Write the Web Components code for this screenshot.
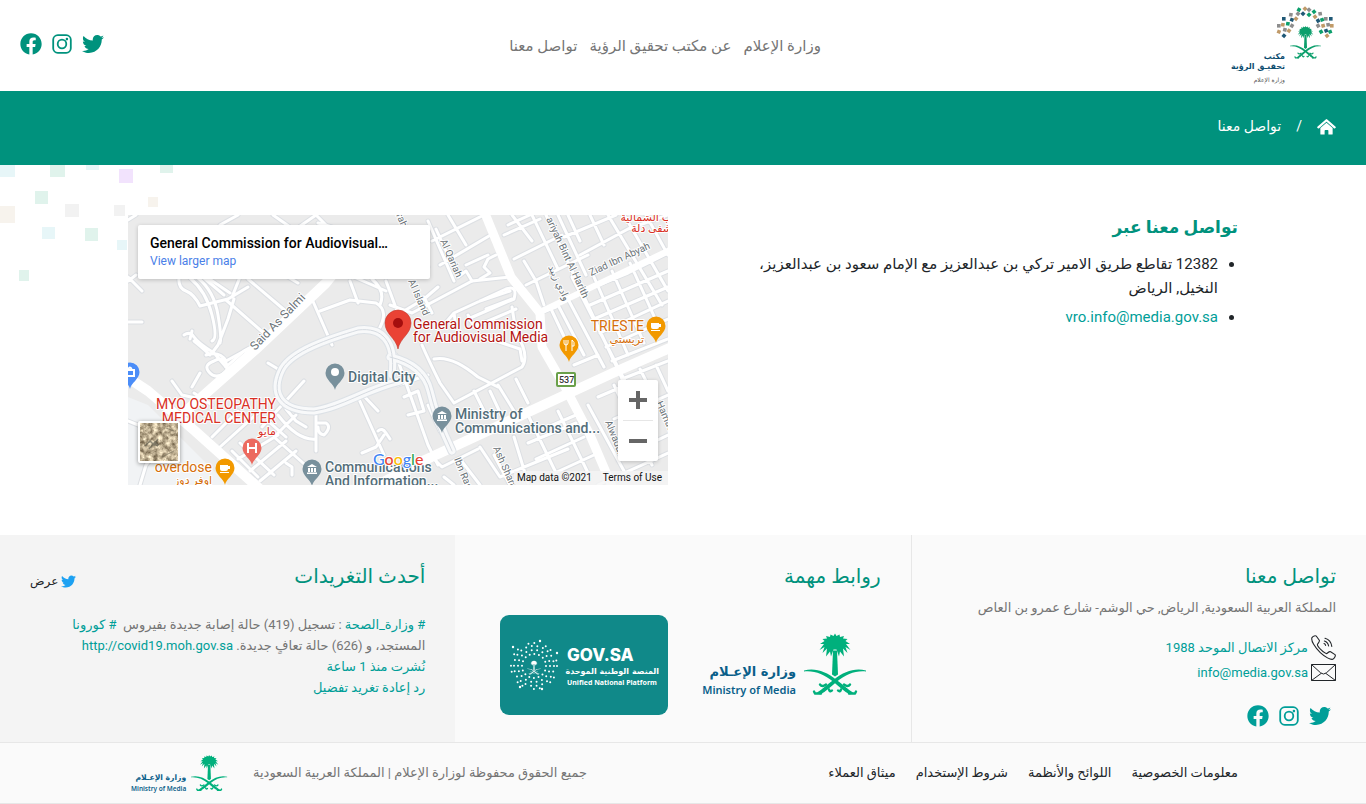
<!DOCTYPE html>
<html lang="ar" dir="rtl">
<head>
<meta charset="utf-8">
<meta name="viewport" content="width=device-width, initial-scale=1">
<title>تواصل معنا</title>
<style>
  :root {
    --brand: #00927d;
    --link: #009e98;
    --ink: #212529;
    --muted: #757575;
    --rule: #e7e7e7;
  }
  body {
    margin: 0;
    background: #fff;
    color: var(--ink);
    font-family: Roboto, "DejaVu Sans", sans-serif;
    font-size: 14px;
    line-height: 24px;
  }
</style>
</head>
<body>
<site-header></site-header>
<page-banner>تواصل معنا</page-banner>
<contact-section></contact-section>
<site-footer></site-footer>
<legal-bar></legal-bar>

<script>
const define = (name, html) => {
  const template = document.createElement('template');
  template.innerHTML = html;
  customElements.define(name, class extends HTMLElement {
    constructor() {
      super();
      this.attachShadow({ mode: 'open' }).append(template.content.cloneNode(true));
    }
  });
};

/* Palm and crossed swords, on a 62 x 62 grid */
const EMBLEM = `
  <g fill="currentColor">
    <path d="M29 17h4l1 24-3 2-3-2z"/>
    <path d="M31 0l1.500 2.500 3-1.500 .5 2.500 4-1-1 2.500 4.500 .5-2 2 4.500 3-4 0 4.500 6-5-3 2 6-4.500-4.500 1 8-4-5-1 5-2.500-7h-3l-2.500 7-1-5-4 5 1-8-4.500 4.500 2-6-5 3 4.500-6-4 0 4.500-3-2-2 4.500-.5-1-2.500 4 1 .5-2.500 3 1.500z"/>
    <path d="M0 37C11 34 22 38 32 46C39 51 44 56 49 59L46 61C40 58 35 53 29 48C20 41 11 37 0 38z"/>
    <path d="M62 37C51 34 40 38 30 46C23 51 18 56 13 59L16 61C22 58 27 53 33 48C42 41 51 37 62 38z"/>
  </g>
  <g fill="none" stroke="currentColor" stroke-width="2.4" stroke-linecap="round">
    <path d="M11 60h6M51 60h-6M16 51q2 3 6 0M46 51q-2 3-6 0M25 56q1 3 3 1M37 56q-1 3-3 1M10 58l1 2M52 58l-1 2"/>
  </g>`;

define('ui-icon', `
  <style>
    :host { display: inline-flex; flex: none; }
    svg { display: none; fill: currentColor; }
    :host([name=facebook]) .facebook, :host([name=instagram]) .instagram,
    :host([name=twitter]) .twitter, :host([name=home]) .home,
    :host([name=phone]) .phone, :host([name=mail]) .mail { display: block; }
    .social { width: 22px; height: 22px; }
    :host([small]) .social { width: 15px; height: 15px; }
    .home { width: 19px; height: 17px; }
    .phone, .mail { width: 25px; height: 25px; }
  </style>
  <svg class="social facebook" viewBox="0 0 512 512"><path d="M504 256C504 119 393 8 256 8S8 119 8 256c0 123.78 90.69 226.38 209.25 245V327.69h-63V256h63v-54.64c0-62.15 37-96.48 93.67-96.48 27.14 0 55.52 4.84 55.52 4.84v61h-31.28c-30.8 0-40.41 19.12-40.41 38.73V256h68.78l-11 71.69h-57.78V501C413.31 482.38 504 379.78 504 256z"/></svg>
  <svg class="social instagram" viewBox="0 0 22 22"><g fill="none" stroke="currentColor" stroke-width="1.8"><rect x="2.2" y="2.2" width="17.6" height="17.6" rx="4.6"/><circle cx="11" cy="11" r="4.3"/></g><circle cx="15.9" cy="6.1" r="1.3"/></svg>
  <svg class="social twitter" viewBox="0 0 512 512"><path d="M459.37 151.716c.325 4.548.325 9.097.325 13.645 0 138.72-105.583 298.558-298.558 298.558-59.452 0-114.68-17.219-161.137-47.106 8.447.974 16.568 1.299 25.34 1.299 49.055 0 94.213-16.568 130.274-44.832-46.132-.975-84.792-31.188-98.112-72.772 6.498.974 12.995 1.624 19.818 1.624 9.421 0 18.843-1.3 27.614-3.573-48.081-9.747-84.143-51.98-84.143-102.985v-1.299c13.969 7.797 30.214 12.67 47.431 13.319-28.264-18.843-46.781-51.005-46.781-87.391 0-19.492 5.197-37.36 14.294-52.954 51.655 63.675 129.3 105.258 216.365 109.807-1.624-7.797-2.599-15.918-2.599-24.04 0-57.828 46.782-104.934 104.934-104.934 30.213 0 57.502 12.67 76.67 33.137 23.715-4.548 46.456-13.32 66.599-25.34-7.798 24.366-24.366 44.833-46.132 57.827 21.117-2.273 41.584-8.122 60.426-16.243-14.292 20.791-32.161 39.308-52.628 54.253z"/></svg>
  <svg class="home" viewBox="0 0 20 18"><path d="M10 5l6.5 5.6V17q0 .6-.6.6H12V13.4q0-.8-.8-.8H8.8q-.8 0-.8.8v4.2H4.1q-.6 0-.6-.6v-6.4z"/><path d="M1.4 9.9L10 2.4l8.6 7.5" fill="none" stroke="currentColor" stroke-width="2.4" stroke-linecap="round" stroke-linejoin="round"/></svg>
  <svg class="phone" viewBox="0 0 25 25"><g fill="none" stroke="#212529" stroke-width="1.1" stroke-linecap="round" stroke-linejoin="round"><path d="M1 2.6C2 1 4.4.3 5.4 1.2L8.3 5.3C9 6.6 7 8.3 6.4 9.4C6.4 11.8 13.4 18.8 15.8 18.6C16.9 18 18 16 19.6 16.7L24 19.6C25 20.7 23.4 23.6 21.8 24.3C19.6 25 14 22 9.3 17.6C4 12.6-.4 5.6 1 2.6z"/><path d="M14.6 10.4q-.3-1.3-1.6-1.8M17.6 11q-.6-3.8-4.2-5M20.8 11.4Q20 5 14 3.2"/></g></svg>
  <svg class="mail" viewBox="0 0 25 25"><path d="M.5 4.5h24v16H.5zM.5 4.5L9.8 13q2.7 2 5.4 0l9.3-8.5M.5 20.5l9.8-7.2M24.5 20.5l-9.8-7.2" fill="none" stroke="#212529"/></svg>
`);

define('social-links', `
  <style>
    :host { display: flex; gap: 9px; color: var(--social, var(--brand)); }
    a { color: inherit; display: flex; }
  </style>
  <a href="#twitter" aria-label="Twitter"><ui-icon name="twitter"></ui-icon></a>
  <a href="#instagram" aria-label="Instagram"><ui-icon name="instagram"></ui-icon></a>
  <a href="#facebook" aria-label="Facebook"><ui-icon name="facebook"></ui-icon></a>
`);

/* Fan of small tiles over the palm: x, y, colour, rotation */
const TILE_COLOURS = { g: '#0c9f6c', n: '#1f5876', s: '#8d8d8d', b: '#c09a68' };
const vroTiles = [
  [53, 20, 's', 0], [53, 26, 'b', 20], [58, 13, 'n', 0], [57, 19, 'b', 10], [59, 24, 's', 15], [58, 30, 'n', 40],
  [65, 9, 's', 10], [62, 18, 'g', 10], [66, 14, 'n', 20], [63, 25, 'b', 35], [70, 13, 'b', 40], [66, 20, 's', 30],
  [73, 4, 'g', 30], [72, 8, 's', 40], [77, 8, 'n', 45], [79, 3, 'b', 45], [83, 4, 's', 45], [83, 9, 'g', 45],
  [88, 6, 'g', 50], [89, 11, 'b', 50], [94, 8, 's', 80], [92, 15, 'n', 60], [96, 14, 'g', 70], [92, 20, 's', 60],
  [100, 13, 's', 0], [97, 20, 'b', 75], [105, 13, 'n', 0], [102, 19, 's', 80], [106, 20, 'b', 0], [100, 25, 'n', 70],
  [104, 26, 'g', 70], [101, 30, 'b', 50], [95, 26, 'g', 60]
].map(([x, y, c, r]) => `<rect x="${x - 2}" y="${y - 2}" width="3.6" height="3.6" fill="${TILE_COLOURS[c]}" transform="rotate(${r} ${x} ${y})"/>`).join('');

define('vision-logo', `
  <style>
    :host { display: block; width: 110px; height: 80px; }
    .root { display: block; width: 100%; height: 100%; direction: ltr; overflow: visible; }
    text { font-family: "DejaVu Sans", sans-serif; text-anchor: end; fill: #0d4d70; font-weight: bold; }
    .sub { font-weight: normal; fill: #555; }
  </style>
  <svg class="root" viewBox="0 0 110 80" role="img" aria-label="مكتب تحقيق الرؤية">
    ${vroTiles}
    <svg x="64" y="20" width="31" height="33" viewBox="0 0 62 62" preserveAspectRatio="none" color="#0c9f6c">${EMBLEM}</svg>
    <text x="59" y="53" font-size="8">مكتب</text>
    <text x="59" y="63" font-size="8">تحقيـق الرؤية</text>
    <text x="59" y="76" font-size="6" class="sub">وزارة الإعلام</text>
  </svg>
`);

define('ministry-logo', `
  <style>
    :host { display: block; width: 170px; height: 66px; }
    :host([small]) { width: 100px; height: 39px; }
    .root { display: block; width: 100%; height: 100%; direction: ltr; }
    text { text-anchor: end; fill: #0a5f8a; }
    .ar { font: bold 13px "DejaVu Sans", sans-serif; }
    .en { font: 600 11px "Noto Sans", "Open Sans", sans-serif; }
  </style>
  <svg class="root" viewBox="0 0 170 66" role="img" aria-label="Ministry of Media">
    <svg x="107" y="1" width="62" height="63" viewBox="0 0 62 62" color="#00b07c">${EMBLEM}</svg>
    <text class="ar" x="99" y="44">وزارة الإعـلام</text>
    <text class="en" x="99" y="62">Ministry of Media</text>
  </svg>
`);

define('gov-logo', `
  <style>
    :host { display: block; width: 168px; height: 100px; border-radius: 9px; background: #108989; }
    .root { display: block; width: 100%; height: 100%; direction: ltr; }
    text { fill: #fff; font-family: "Noto Sans", sans-serif; font-weight: bold; }
    .name { font: 800 17px Inter, sans-serif; }
    .ar { font: bold 8px "DejaVu Sans", sans-serif; text-anchor: end; }
    .dots circle { fill: none; stroke: #fff; stroke-linecap: round; stroke-width: 2; }
  </style>
  <svg class="root" viewBox="0 0 168 100" role="img" aria-label="GOV.SA">
    <g class="dots">
      <circle cx="34" cy="51" r="12" stroke-dasharray="0 4.71"/>
      <circle cx="34" cy="51" r="16" stroke-dasharray="0 5.58"/>
      <circle cx="34" cy="51" r="20" stroke-dasharray="0 5.71"/>
      <circle cx="34" cy="51" r="23" stroke-dasharray="0 12 0 6"/>
    </g>
    <g fill="#fff"><circle cx="40" cy="26" r="1.2"/><circle cx="13" cy="32" r="1.2"/><circle cx="57" cy="38" r="1.2"/><circle cx="42" cy="74" r="1.2"/><circle cx="20" cy="72" r="1.2"/></g>
    <svg x="27" y="45" width="14" height="15" viewBox="0 0 62 62" color="#fff">${EMBLEM}</svg>
    <text class="name" x="67" y="46">GOV.SA</text>
    <text class="ar" x="159" y="59">المنصة الوطنية الموحدة</text>
    <text x="67" y="70" font-size="7">Unified National Platform</text>
  </svg>
`);

define('site-header', `
  <style>
    :host { display: block; }
    header { display: flex; justify-content: space-between; align-items: center; min-height: 91px; padding: 0 30px 0 20px; box-sizing: border-box; }
    nav { display: flex; gap: 12px; }
    a { color: var(--muted); text-decoration: none; font-size: 15px; }
    social-links { padding-bottom: 4px; }
  </style>
  <header>
    <vision-logo></vision-logo>
    <nav aria-label="القائمة الرئيسية">
      <a href="#ministry">وزارة الإعلام</a>
      <a href="#about">عن مكتب تحقيق الرؤية</a>
      <a href="#contact">تواصل معنا</a>
    </nav>
    <social-links></social-links>
  </header>
`);

define('page-banner', `
  <style>
    :host { display: flex; align-items: center; gap: 15px; min-height: 74px; padding: 0 30px 4px; box-sizing: border-box; background: var(--brand); color: #fff; font-size: 14px; }
    a { color: inherit; display: flex; }
  </style>
  <a href="#home" aria-label="الرئيسية"><ui-icon name="home"></ui-icon></a>
  <span>/</span>
  <span><slot></slot></span>
`);

define('map-embed', `
  <style>
    :host { display: block; position: relative; direction: ltr; height: 270px; overflow: hidden; background: #ebebeb; }
    .canvas { display: block; width: 100%; height: 100%; font-family: Roboto, "DejaVu Sans", sans-serif; }
    .case { stroke: #dcdfe3; stroke-width: 5; }
    .minor { stroke: #fff; stroke-width: 3; }
    .avenue path { stroke: #fff; stroke-width: 10; }
    .avenue .mid { stroke-width: 9; }
    .avenue .narrow { stroke-width: 6; }
    .loop { stroke: #dce1e6; stroke-width: 9; }
    .loop-mid { stroke: #f8f9fa; stroke-width: 7; }
    .loop-line { stroke: #d5dae0; stroke-width: 1; }
    .street text, .place text { paint-order: stroke; stroke: #fff; stroke-width: 2px; stroke-linejoin: round; }
    .street text { fill: #6b7378; font-size: 10px; }
    .street .wide { font-size: 12px; }
    .place text { font-size: 14px; }
    .place .ar { font-size: 11px; }
    .place .brand { font: 500 16px Lato, sans-serif; }
    .end { text-anchor: end; }
    .card { position: absolute; top: 10px; left: 10px; width: 292px; box-sizing: border-box; padding: 9px 12px; background: #fff; border-radius: 2px; box-shadow: 0 1px 4px rgba(0,0,0,.2); line-height: 18px; }
    .card b { display: block; color: #000; font-size: 14px; font-weight: 500; }
    .card a { display: block; color: #4a80e8; font-size: 12px; text-decoration: none; }
    .zoom { position: absolute; right: 10px; top: 165px; width: 40px; background: #fff; border-radius: 2px; box-shadow: 0 1px 4px rgba(0,0,0,.2); }
    .zoom button { display: flex; align-items: center; justify-content: center; width: 40px; height: 40px; padding: 0; border: 0; background: none; }
    .zoom hr { margin: 0 5px; border: 0; height: 1px; background: #e6e6e6; }
    .layer { position: absolute; left: 10px; top: 206px; width: 42px; height: 42px; padding: 0; border: 2px solid #fff; border-radius: 2px; box-shadow: 0 1px 4px rgba(0,0,0,.4); overflow: hidden; }
    .layer svg { display: block; }
    .terms { position: absolute; right: 0; bottom: 0; display: flex; gap: 11px; padding: 0 6px 0 3px; background: rgba(245,245,245,.8); color: #111; font: 10px/14px Roboto, sans-serif; }
    .terms a { color: inherit; text-decoration: none; }
  </style>
  <svg class="canvas" viewBox="0 0 540 270" preserveAspectRatio="xMidYMid slice" role="img" aria-label="General Commission for Audiovisual Media">
    <defs>
      <path id="pin" d="M0 17C-1 11-9.5 7-9.5 0A9.5 9.5 0 1 1 9.5 0C9.5 7 1 11 0 17z"/>
      <path id="bank" d="M-5-2L0-5 5-2zM-4-1h2v4h-2zM-1-1h2v4h-2zM2-1h2v4H2zM-5 3.500h10v1.500H-5z" fill="#fff"/>
      <path id="cup" d="M-5-3h8v4q0 2-2 2h-4q-2 0-2-2zM3-2h2v3H3M-5 4h9v1h-9z" fill="#fff"/>
      <g id="roads">
        <path d="M0 5L8 0M0 62L14 76M0 66L8 60M92 10L110 0M145 0L162 12M188 0L200 12M190 8L204 12M168 14L188 0"/>
        <path d="M51 63Q50 73 58 76T72 91L100 84L120 72M62 63Q78 76 84 100T84 126M70 63Q86 76 90 100T92 128M76 63L96 80M80 63L102 78M106 84L100 104 90 130 84 138M104 82L112 62M98 85L138 120M120 64L160 98M160 62L170 68M0 107L14 107"/>
        <path d="M56 120Q62 116 66 122T86 138L98 152M62 124L64 116M66 126Q76 134 82 140M78 140Q92 136 98 146L120 134"/>
        <path d="M86 146q8-5 12 2t-3 11q-8 5-14-2t5-11M98 152L116 136 134 126"/>
        <path d="M184 84L204 130M192 96L222 85 248 88Q262 96 250 116M222 66L230 88M244 64Q258 76 252 90M226 62L258 76M150 158Q146 166 150 174M140 148L150 154M44 166L54 180 72 184M72 158L64 172M66 178L84 190"/>
        <path d="M158 194L168 206 178 212M168 200L146 222 184 256M134 212L176 166M140 206L158 222 M92 232L132 196M84 222L110 196M150 200Q170 226 188 224M188 198V236M190 208h8q6 4-2 12-6-1-6-8M230 182L256 240M233 178L250 196M250 216q4-4 8 2t4 6M256 220l-8 12-14 6M110 244L150 220M122 256L158 226M132 266L168 236M104 236L130 262M112 228L146 260M0 206L30 218M12 270L18 250 30 236M158 248l6 4v8"/>
        <path d="M262 90L284 98 344 66M258 66L272 104M296 82L304 98M276 96L296 84 310 72M272 0L300 52M300 6L326 66M304 26L356 0M312 50L366 18M318 36L308 14M320 0L338 30M338 50L360 40M330 62l8-6 6 10M352 64l10-6-6-6 4-8 8-4"/>
        <path d="M314 112L326 98 378 74Q390 70 386 84L340 104M326 98L328 112M340 100L346 112 388 94M340 104L352 112M352 86L382 76M358 94L384 84M344 66L382 62M404 26L384 0M376 20L412 4M386 44L434 20M398 70L460 40M396 46L408 66 416 90"/>
        <path d="M404 0L430 54M430 0L458 60M380 10L402 0M412 98L428 92 M418 0L498 172M444 62L500 172M436 22L488 0M452 40L500 14 540 0M456 76L500 58 540 38M440 0L452 26M462 0L476 30M480 0L534 90M496 0L540 76M518 0L540 40M462 90L540 56M466 104L540 72M472 118L540 86M478 132L540 104M484 146L540 124M466 62L500 140M484 56L516 128M502 48L530 110M424 96L440 130M430 90L456 140M440 84L476 152M446 150L470 140"/>
        <path d="M294 130Q300 144 312 168L326 188M306 144Q324 140 350 162L370 172M326 188L394 152Q402 140 388 118L384 92M350 120L392 134 394 146M362 176L376 206M370 170L386 196M388 164L400 188M346 176L358 200M300 190L312 216 324 232M268 140L300 230 310 250M276 182L290 176 296 196 280 200M270 170L300 160"/>
        <path d="M302 240L314 252 350 234M316 262L326 270M332 244L352 270M352 232L372 262 440 234M386 222L400 268M400 200L430 262M420 212L448 200M430 196L462 262M400 228L448 208M408 244L456 222M418 262L466 240M366 240L382 270M470 182L498 170M460 190L496 256M486 170L524 250M500 190L520 180M494 164L540 146M512 154L540 210M486 204L540 180M498 240L540 220M470 270L540 238M528 150L540 176"/>
      </g>
    </defs>
    <path d="M0 182L20 190 100 270H0z" fill="#f1f3f5"/>
    <g fill="none" stroke-linejoin="round" stroke-linecap="round">
      <use class="case" href="#roads"/>
      <g class="avenue">
        <path d="M225 34L198 68 127 135 58 196"/>
        <path d="M-4 160L20 176 67 216 134 276"/>
        <path class="mid" d="M356 -4L383 62 412 98 414 132 437 172 462 220 486 276"/>
        <path d="M250 270L297 245 353 219 437 180 487 157 544 132"/>
        <path class="narrow" d="M410 98L460 74 544 34"/>
      </g>
      <use class="minor" href="#roads"/>
      <path class="loop" d="M264 160C268 126 254 112 230 115C200 124 164 136 154 154C142 178 152 196 186 196C214 192 238 174 272 166M262 142Q296 150 302 176T324 236"/>
      <path class="loop-mid" d="M264 160C268 126 254 112 230 115C200 124 164 136 154 154C142 178 152 196 186 196C214 192 238 174 272 166M262 142Q296 150 302 176T324 236"/>
      <path class="loop-line" d="M264 160C268 126 254 112 230 115C200 124 164 136 154 154C142 178 152 196 186 196C214 192 238 174 272 166M262 142Q296 150 302 176T324 236"/>
    </g>
    <g class="street">
      <text class="wide" transform="translate(127 136) rotate(-46)">Said As Salmi</text>
      <text transform="translate(312 26) rotate(66)">Al Qariah</text>
      <text transform="translate(280 66) rotate(66)">Al Island</text>
      <text transform="translate(418 4) rotate(65)">ariyah Bint Al Harith</text>
      <text transform="translate(463 61) rotate(-25)">Ziad Ibn Abyah</text>
      <text transform="translate(420 52) rotate(65)">وادي زبيد</text>
      <text transform="translate(326 244) rotate(68)">Ibn Rashid</text>
      <text transform="translate(365 233) rotate(66)">Ash Sharafiyah</text>
      <text transform="translate(477 207) rotate(68)">Alwadan</text>
      <text transform="translate(528 188) rotate(66)">Hamad Ibn</text>
      <text transform="translate(268 0) rotate(66)">rah</text>
    </g>
    <use href="#pin" x="207" y="158" fill="#78909c"/><circle cx="207" cy="157" r="4" fill="#fff"/>
    <use href="#pin" x="314" y="201" fill="#78909c"/><use href="#bank" x="314" y="201"/>
    <use href="#pin" x="184" y="254" fill="#78909c"/><use href="#bank" x="184" y="254"/>
    <use href="#pin" x="97" y="253" fill="#f29900"/><use href="#cup" x="97" y="253"/>
    <use href="#pin" x="528" y="111" fill="#f29900"/><use href="#cup" x="528" y="111"/>
    <use href="#pin" x="441" y="130" fill="#f29900"/>
    <path d="M436 125v3q0 2 2 2v6M438 125v5M440 125v3q0 2-2 2M444 136v-11q3 2 2 6h-2" fill="none" stroke="#fff"/>
    <use href="#pin" x="124" y="233" fill="#ec6a5f"/><path d="M120 228v10M128 228v10M120 233h8" stroke="#fff" stroke-width="2"/>
    <use href="#pin" x="2" y="157" fill="#4b8df8"/><path d="M-3 155h9v6h-9zM0 155q2-5 4 0" fill="none" stroke="#fff" stroke-width="2"/>
    <path d="M270 134C268 123 257 119 257 108A13 13 0 0 1 283 108C283 119 272 123 270 134z" fill="#ea4335" stroke="#c5372c" stroke-width=".6"/>
    <circle cx="270" cy="108" r="5" fill="#a50e0e"/>
    <rect x="429" y="158" width="18" height="13" rx="1" fill="#fff" stroke="#6aa04a" stroke-width="2"/>
    <text x="431" y="168" font-size="9" font-weight="500" fill="#333">537</text>
    <g class="place">
      <g fill="#b31412"><text x="285" y="114">General Commission</text><text x="285" y="127">for Audiovisual Media</text></g>
      <g fill="#546e7a" font-weight="500"><text x="220" y="167">Digital City</text><text x="327" y="204">Ministry of</text><text x="327" y="218">Communications and...</text><text x="197" y="257">Communications</text><text x="197" y="271">And Information...</text></g>
      <g fill="#d93025" class="end"><text x="148" y="194">MYO OSTEOPATHY</text><text x="148" y="208">MEDICAL CENTER</text><text class="ar" x="148" y="220">مايو</text><text class="ar" x="544" y="6">ب الشمالية</text><text class="ar" x="544" y="17">شفى دلة</text></g>
      <g fill="#d56e0c" class="end"><text x="84" y="257">overdose</text><text class="ar" x="84" y="269">اوفر دوز</text><text x="516" y="116">TRIESTE</text><text class="ar" x="516" y="128">تريستي</text></g>
      <text class="brand" x="245" y="250"><tspan fill="#4285f4">G</tspan><tspan fill="#ea4335">o</tspan><tspan fill="#fbbc05">o</tspan><tspan fill="#4285f4">g</tspan><tspan fill="#34a853">l</tspan><tspan fill="#ea4335">e</tspan></text>
    </g>
  </svg>
  <div class="card"><b>General Commission for Audiovisual…</b><a href="#map">View larger map</a></div>
  <button class="layer" type="button" aria-label="Satellite">
    <svg width="38" height="38" viewBox="0 0 38 38">
      <filter id="ground" color-interpolation-filters="sRGB"><feTurbulence type="fractalNoise" baseFrequency=".22" numOctaves="4" seed="4"/><feColorMatrix values=".9 0 0 0 .3  .9 0 0 0 .24  .85 0 0 0 .15  0 0 0 0 1"/></filter>
      <rect width="38" height="38" filter="url(#ground)"/>
      <path d="M5 23L10 18l4 4 4-6M9 26l6-7 4 3M12 20l6 3" fill="none" stroke="#4b4b40" stroke-width="1.500" opacity=".6"/>
      <path d="M22 34l12-6M26 5l8 3" fill="none" stroke="#6d6652" opacity=".6"/>
    </svg>
  </button>
  <div class="zoom">
    <button type="button" aria-label="Zoom in"><svg width="18" height="18"><path d="M9 0v18M0 9h18" stroke="#666" stroke-width="4"/></svg></button>
    <hr>
    <button type="button" aria-label="Zoom out"><svg width="18" height="18"><path d="M0 9h18" stroke="#666" stroke-width="4"/></svg></button>
  </div>
  <div class="terms"><span>Map data ©2021</span><a href="#terms">Terms of Use</a></div>
`);

define('contact-section', `
  <style>
    :host { display: block; position: relative; }
    .tiles { position: absolute; top: 0; left: 0; }
    .inner { position: relative; display: grid; grid-template-columns: 1fr 1fr; gap: 30px; max-width: 1110px; margin: 0 auto; padding: 50px 15px; }
    h2 { margin: 0 0 13px; color: var(--brand); font-size: 17px; line-height: 24px; }
    ul { margin: 0; padding: 0 20px 0 0; font-size: 15px; }
    li { margin-bottom: 5px; }
    a { color: var(--link); text-decoration: none; }
  </style>
  <svg class="tiles" width="180" height="120" aria-hidden="true">
    <path fill="#e7f6f8" d="M0 0h15v12H0zM86 0h13v5H86zM42 62h13v12H42zM117 75h10v10h-10z"/>
    <path fill="#e0f3ec" d="M50 0h15v12H50zM160 0h13v8h-13zM35 26h13v13H35zM85 63h13v13H85zM19 105h10v11H19z"/>
    <path fill="#f2f2f2" d="M65 39h14v13H65zM114 40h11v11h-11z"/>
    <path fill="#f7f3ed" d="M148 32h10v10h-10zM0 41h15v17H0z"/>
    <path fill="#f2e3fd" d="M119 4h14v14h-14z"/>
  </svg>
  <div class="inner">
    <div>
      <h2>تواصل معنا عبر</h2>
      <ul>
        <li>12382 تقاطع طريق الامير تركي بن عبدالعزيز مع الإمام سعود بن عبدالعزيز،<br>النخيل, الرياض</li>
        <li><a href="mailto:vro.info@media.gov.sa">vro.info@media.gov.sa</a></li>
      </ul>
    </div>
    <map-embed></map-embed>
  </div>
`);

define('footer-column', `
  <style>
    :host { display: block; padding: 26px 30px 0; min-height: 207px; box-sizing: border-box; }
    .head { display: flex; justify-content: space-between; align-items: flex-start; height: 30px; }
    h3 { margin: 0; color: var(--brand); font-size: 20px; font-weight: 400; line-height: 30px; }
  </style>
  <div class="head"><h3><slot name="title"></slot></h3><slot name="action"></slot></div>
  <slot></slot>
`);

define('site-footer', `
  <style>
    :host { display: grid; grid-template-columns: 1fr 1fr 1fr; background: #fafafa; border-bottom: 1px solid var(--rule); color: var(--muted); }
    a { color: var(--link); text-decoration: none; }
    p { margin: 0; }
    .contact { border-left: 1px solid var(--rule); }
    .tweets { background: #f4f4f4; }
    .address { margin: 6px 0 16px; line-height: 22px; font-size: 13px; }
    .row { display: flex; align-items: center; gap: 3px; height: 25px; font-size: 13px; }
    social-links { --social: #009e98; margin-top: 20px; padding-right: 5px; }
    .logos { display: flex; align-items: center; gap: 29px; margin: 24px 14px 0 0; }
    .view { display: flex; align-items: center; gap: 3px; padding-top: 8px; color: var(--ink); font-size: 12px; }
    .view ui-icon { color: #1da1f2; }
    .tweet { margin-top: 23px; font-size: 13px; line-height: 21px; }
  </style>
  <footer-column class="contact">
    <span slot="title">تواصل معنا</span>
    <p class="address">المملكة العربية السعودية, الرياض, حي الوشم- شارع عمرو بن العاص</p>
    <a class="row" href="tel:1988"><ui-icon name="phone"></ui-icon><span>مركز الاتصال الموحد 1988</span></a>
    <a class="row" href="mailto:info@media.gov.sa"><ui-icon name="mail"></ui-icon><span>info@media.gov.sa</span></a>
    <social-links></social-links>
  </footer-column>
  <footer-column>
    <span slot="title">روابط مهمة</span>
    <div class="logos">
      <a href="#media"><ministry-logo></ministry-logo></a>
      <a href="#gov"><gov-logo></gov-logo></a>
    </div>
  </footer-column>
  <footer-column class="tweets">
    <span slot="title">أحدث التغريدات</span>
    <a slot="action" class="view" href="#tweets"><ui-icon name="twitter" small></ui-icon><span>عرض</span></a>
    <div class="tweet">
      <p><a href="#moh"># وزارة_الصحة</a> : تسجيل (419) حالة إصابة جديدة بفيروس &nbsp;<a href="#corona"># كورونا</a><br>المستجد، و (626) حالة تعافٍ جديدة. <a href="#covid19" dir="ltr">http://covid19.moh.gov.sa</a></p>
      <p><a href="#time">نُشرت منذ 1 ساعة</a></p>
      <p><a href="#reply">رد</a> <a href="#retweet">إعادة تغريد</a> <a href="#like">تفضيل</a></p>
    </div>
  </footer-column>
`);

define('legal-bar', `
  <style>
    :host { display: block; background: #fafafa; border-bottom: 1px solid var(--rule); }
    .inner { display: flex; justify-content: space-between; align-items: center; max-width: 1110px; min-height: 60px; margin: 0 auto; padding: 0 15px; }
    nav { display: flex; gap: 20px; }
    a { color: var(--ink); text-decoration: none; font-size: 13px; }
    .owner { display: flex; align-items: center; gap: 25px; color: var(--muted); font-size: 13px; }
  </style>
  <div class="inner">
    <nav aria-label="روابط قانونية">
      <a href="#privacy">معلومات الخصوصية</a>
      <a href="#rules">اللوائح والأنظمة</a>
      <a href="#use">شروط الإستخدام</a>
      <a href="#charter">ميثاق العملاء</a>
    </nav>
    <div class="owner">
      <span>جميع الحقوق محفوظة لوزارة الإعلام | المملكة العربية السعودية</span>
      <ministry-logo small></ministry-logo>
    </div>
  </div>
`);
</script>
</body>
</html>
